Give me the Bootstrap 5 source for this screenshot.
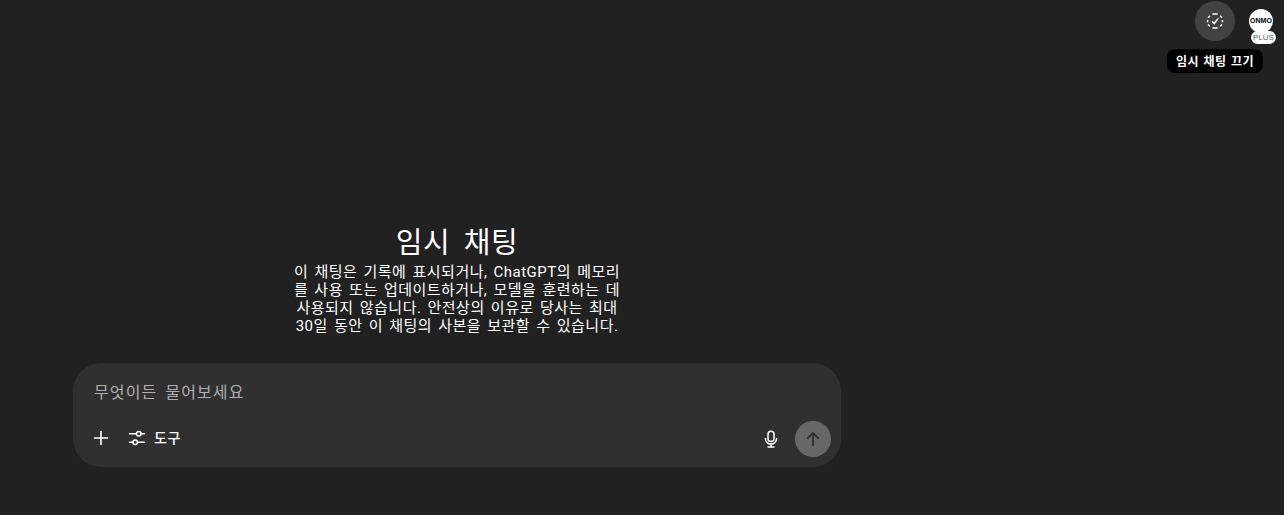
<!DOCTYPE html>
<html lang="ko">

<head>
  <meta charset="UTF-8">
  <meta name="viewport" content="width=device-width, initial-scale=1.0">
  <title>임시 채팅</title>
  <link href="https://cdn.jsdelivr.net/npm/bootstrap@5.3.0/dist/css/bootstrap.min.css" rel="stylesheet">
  <style>
    html, body {
      height: 100%;
    }

    body {
      font-family: Roboto, "Noto Sans CJK KR", sans-serif;
      background-color: #212121;
      color: #fff;
      overflow: hidden;
    }

    .top-area {
      height: 42px;
      padding: 1px 3px 0 0;
    }

    .round-btn {
      width: 40px;
      height: 40px;
      background: #424242;
    }

    .tip-box {
      position: absolute;
      top: 49px;
      right: 21px;
      width: 96px;
      height: 24px;
      padding-top: 1px;
      background: #000;
      border-radius: 8px;
      font-size: 12px;
      font-weight: 700;
      letter-spacing: .5px;
      word-spacing: 1px;
      line-height: 24px;
      text-align: center;
      white-space: nowrap;
    }

    .avatar-wrap {
      position: relative;
      width: 40px;
      height: 40px;
      margin-left: 6px;
    }

    .avatar-dot {
      position: absolute;
      left: 8px;
      top: 8px;
      width: 24px;
      height: 24px;
      background: #fff;
      color: #000;
      font-family: "Liberation Sans", sans-serif;
      font-size: 7px;
      font-weight: 700;
      line-height: 24px;
      text-align: center;
    }

    .plus-tag {
      position: absolute;
      left: 10px;
      top: 30px;
      width: 25px;
      height: 13px;
      background: #fff;
      color: #666;
      border-radius: 7px;
      font-family: "Liberation Sans", sans-serif;
      font-size: 8px;
      line-height: 13px;
      text-align: center;
    }

    .main-col {
      width: 914px;
    }

    .intro {
      margin-top: 183px;
      height: 138px;
    }

    .intro-title {
      font-size: 29px;
      font-weight: 400;
      line-height: 34px;
      letter-spacing: .6px;
      word-spacing: 5.5px;
      padding-top: 1px;
      margin: 0;
    }

    .intro-text {
      width: 334px;
      font-size: 15px;
      line-height: 18px;
      letter-spacing: .48px;
      word-spacing: 2px;
      margin: 3px 0 0;
    }

    .composer {
      width: 768px;
      height: 104px;
      background: #303030;
      border-radius: 28px;
      padding: 0 10px 10px 12px;
    }

    .ask-text {
      padding: 19px 0 0 9px;
      height: 58px;
      font-size: 16px;
      line-height: 22px;
      letter-spacing: 1.1px;
      word-spacing: 3px;
      color: #afafaf;
    }

    .plus-icon {
      margin: -2px 0 0 4px;
    }

    .tool-icon {
      margin: -2px 0 0 14px;
    }

    .mic-icon {
      margin: -1px 14px 0 0;
    }

    .tool-label {
      font-size: 14px;
      font-weight: 500;
      margin: -2px 0 0 7px;
      letter-spacing: .6px;
    }

    .send-btn {
      width: 36px;
      height: 36px;
      background: #676767;
    }
  </style>
</head>

<body>
  <div class="top-area d-flex justify-content-end">
    <div class="round-btn rounded-circle d-flex align-items-center justify-content-center">
      <svg width="20" height="20" viewBox="0 0 20 20" fill="none" stroke="#fff" stroke-width="1.5">
        <path d="M7.4 3.1h5.2M15.2 4.8l1.7 1.9M17.4 9v2.2M16.9 13.4l-1.7 1.9M12.6 16.9H7.4M4.8 15.3l-1.7-1.9M2.6 11.2V9M3.1 6.7l1.7-1.9"></path>
        <path d="M7 10.3l2.2 2.2L13.2 7.4"></path>
      </svg>
    </div>
    <div class="avatar-wrap">
      <div class="avatar-dot rounded-circle">ONMO</div>
      <div class="plus-tag">PLUS</div>
    </div>
    <div class="tip-box">임시 채팅 끄기</div>
  </div>

  <div class="main-col d-flex flex-column align-items-center">
    <div class="intro text-center d-flex flex-column align-items-center">
      <h1 class="intro-title">임시 채팅</h1>
      <p class="intro-text">이 채팅은 기록에 표시되거나, ChatGPT의 메모리를 사용 또는 업데이트하거나, 모델을 훈련하는 데 사용되지 않습니다. 안전상의 이유로 당사는 최대 30일 동안 이 채팅의 사본을 보관할 수 있습니다.</p>
    </div>

    <div class="composer">
      <div class="ask-text">무엇이든 물어보세요</div>
      <div class="d-flex align-items-center">
        <svg class="plus-icon" width="24" height="24" viewBox="0 0 24 24" fill="none" stroke="#fff" stroke-width="1.6" stroke-linecap="round">
          <path d="M12 5.5v13M5.5 12h13"></path>
        </svg>
        <svg class="tool-icon" width="20" height="20" viewBox="0 0 20 20" fill="none" stroke="#fff" stroke-width="1.5" stroke-linecap="round">
          <path d="M2.5 5.7h7M14 5.7h3.5M2.5 14.3h3.5M10.5 14.3h7"></path>
          <circle cx="11.8" cy="5.7" r="2.3"></circle>
          <circle cx="8.2" cy="14.3" r="2.3"></circle>
        </svg>
        <span class="tool-label">도구</span>
        <svg class="ms-auto mic-icon" width="20" height="20" viewBox="0 0 20 20" fill="none" stroke="#fff" stroke-width="1.5" stroke-linecap="round">
          <rect x="7" y="2.2" width="6" height="10.3" rx="3"></rect>
          <path d="M4.4 9.5a5.6 5.6 0 0 0 11.2 0M10 15v3M7 18h6"></path>
        </svg>
        <div class="send-btn rounded-circle d-flex align-items-center justify-content-center">
          <svg width="18" height="18" viewBox="0 0 18 18" fill="none" stroke="#2f2f2f" stroke-width="1.8" stroke-linecap="round" stroke-linejoin="round">
            <path d="M9 15V3M3.8 8.2L9 3l5.2 5.2"></path>
          </svg>
        </div>
      </div>
    </div>
  </div>

  <script src="https://cdn.jsdelivr.net/npm/bootstrap@5.3.0/dist/js/bootstrap.bundle.min.js"></script>
</body>

</html>
